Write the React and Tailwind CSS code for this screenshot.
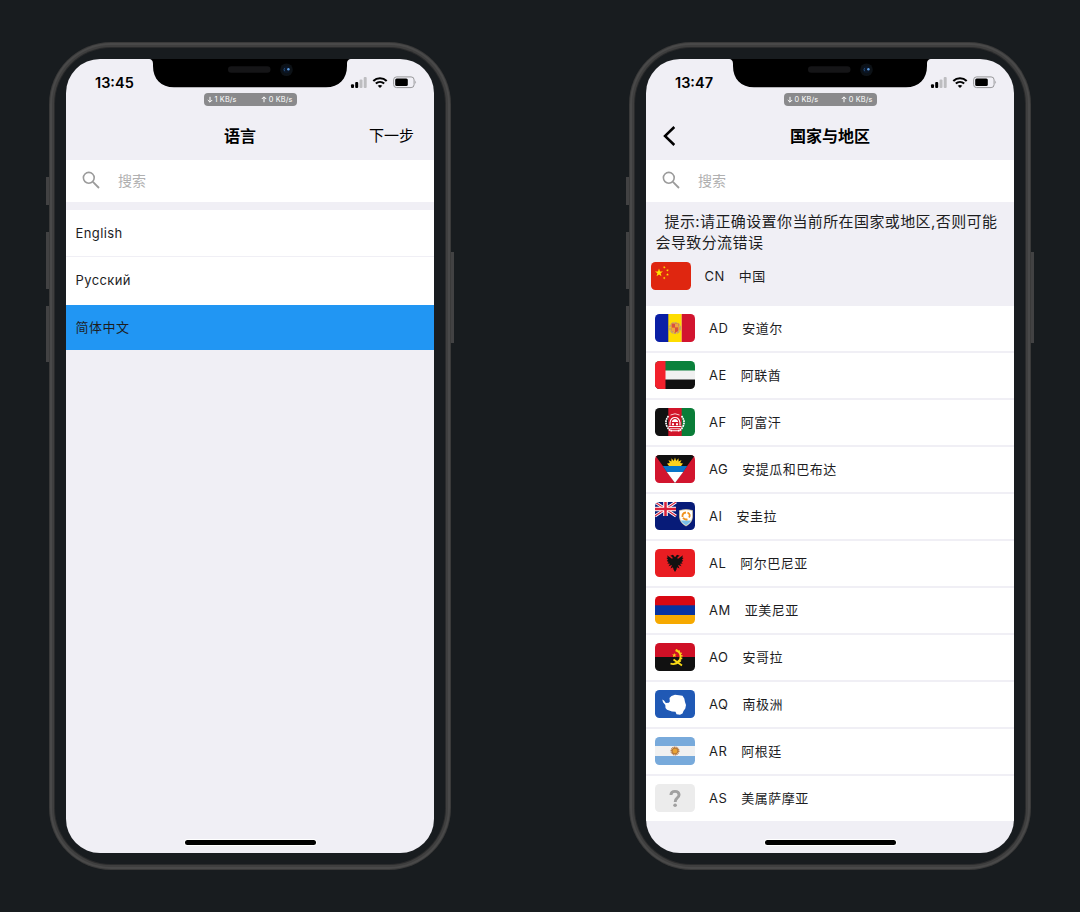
import React from "react";

const FONT = "font-['Inter','Noto_Sans_CJK_SC',sans-serif]";

function Notch() {
  return (
    <svg className="absolute left-[82px] top-0" width="204" height="29" viewBox="0 0 204 29">
      <path d="M0 0H204C200 0 199 2 199 5V7C199 20 191 28.300 178 28.300H26C13 28.300 5 20 5 7V5C5 2 4 0 0 0Z" fill="#000" />
      <rect x="80" y="7.200" width="42.500" height="6.600" rx="3.300" fill="#151517" />
      <circle cx="138.500" cy="10.700" r="6.300" fill="#0c1116" />
      <circle cx="138.500" cy="10.700" r="3.600" fill="#0a1526" />
      <path d="M136.600 9.200a2.600 2.600 0 0 0 0 3" stroke="#27507c" strokeWidth="1" fill="none" />
      <circle cx="140.400" cy="10.200" r="1.200" fill="#5b9be0" />
    </svg>
  );
}

function StatusIcons() {
  return (
    <svg className="absolute left-[284px] top-[16px]" width="68" height="16" viewBox="0 0 68 16">
      <rect x="1" y="9.300" width="3" height="3.700" rx="1" fill="#000" />
      <rect x="5.200" y="7" width="3" height="6" rx="1" fill="#000" />
      <rect x="9.500" y="4.500" width="3" height="8.500" rx="1" fill="#bdbdc0" />
      <rect x="13.700" y="2" width="3" height="11" rx="1" fill="#bdbdc0" />
      <path d="M23.300 5.900a9.800 9.800 0 0 1 13.400 0" stroke="#000" strokeWidth="2.100" fill="none" />
      <path d="M25.800 8.600a6.200 6.200 0 0 1 8.400 0" stroke="#000" strokeWidth="2" fill="none" />
      <path d="M27.700 10.800Q30 9 32.300 10.800L30 13.100Z" fill="#000" />
      <rect x="43.600" y="1.900" width="20.500" height="10.700" rx="3" fill="none" stroke="#97979a" strokeWidth="1" />
      <rect x="45.200" y="3.500" width="12.600" height="7.500" rx="1.500" fill="#000" />
      <path d="M65.300 5.400q1.700 1.800 0 3.600Z" fill="#97979a" />
    </svg>
  );
}

function Arrow({ up }) {
  return (
    <svg width="6" height="7" viewBox="0 0 6 7" className={up ? "mr-[1.5px]" : "mr-[1.5px] rotate-180"}>
      <path d="M3 6.200V1M.8 3L3 .8L5.200 3" stroke="#fff" strokeWidth="1" fill="none" />
    </svg>
  );
}

function SideButton({ className }) {
  return <div className={"absolute bg-[#424243] " + className} />;
}

function Phone({ time, down, children }) {
  return (
    <div className="relative h-[828px] w-[402px] shrink-0">
      <SideButton className="-left-[3px] top-[135px] h-[28px] w-[4px]" />
      <SideButton className="-left-[3px] top-[190px] h-[57px] w-[4px]" />
      <SideButton className="-left-[3px] top-[264px] h-[56px] w-[4px]" />
      <SideButton className="-right-[3px] top-[210px] h-[91px] w-[4px]" />
      <div className="relative h-full w-full rounded-[62px] bg-[#3a3a3a] p-[1px]">
        <div className="h-full w-full rounded-[61px] bg-[#494949] p-[2px]">
          <div className="h-full w-full rounded-[59px] bg-[#3f3f3f] p-[2px]">
            <div className="h-full w-full rounded-[57px] bg-[#2a2b2c] p-[1px]">
              <div className="h-full w-full rounded-[56px] bg-[#181c1f] p-[11px]">
                <div className="relative flex h-full w-full flex-col overflow-hidden rounded-[34px] bg-[#f0eff5]">
                  <Notch />
                  <StatusIcons />
                  <div className="flex h-[34px] shrink-0 items-end pl-[29px] pb-[1px] text-[14.5px] font-semibold leading-[18px] text-black">{time}</div>
                  <div className="ml-[137.5px] flex h-[12.5px] w-[93px] shrink-0 items-center justify-between rounded-[4px] bg-[#8a8a8c] pl-[3.5px] pr-[4px] text-[7.3px] leading-none tracking-[0.15px] text-white">
                    <span className="flex items-center"><Arrow />{down} KB/s</span>
                    <span className="flex items-center"><Arrow up />0 KB/s</span>
                  </div>
                  {children}
                  <div className="absolute bottom-[8px] left-[118.5px] h-[5px] w-[131px] rounded-full bg-black ring-1 ring-white" />
                </div>
              </div>
            </div>
          </div>
        </div>
      </div>
    </div>
  );
}

function Search() {
  return (
    <div className="flex h-[41.5px] shrink-0 items-center bg-white pl-[16px] text-[14px] text-[#b0b0b0]">
      <svg width="19" height="19" viewBox="0 0 19 19" className="mr-[17px]" fill="none" stroke="#9b9b9b">
        <circle cx="6.800" cy="6.800" r="5.400" strokeWidth="1.600" />
        <path d="M10.900 10.900L17 17" strokeWidth="1.800" />
      </svg>
      <span className="mb-[1.5px]">搜索</span>
    </div>
  );
}

const star = (cx, cy, r, rot = 0) => {
  const pts = [];
  for (let i = 0; i < 10; i++) {
    const a = ((i * 36 - 90 + rot) * Math.PI) / 180;
    const q = i % 2 ? r * 0.4 : r;
    pts.push(`${cx + q * Math.cos(a)},${cy + q * Math.sin(a)}`);
  }
  return pts.join(" ");
};

const flags = {
  CN: (
    <>
      <rect width="40" height="28" fill="#df2610" />
      <polygon points={star(8, 10.800, 4.200)} fill="#ffe600" />
      <polygon points={star(13.300, 5.300, 1.500, 20)} fill="#ffe600" />
      <polygon points={star(16.500, 8.300, 1.500, 40)} fill="#ffe600" />
      <polygon points={star(16.500, 12.600, 1.500)} fill="#ffe600" />
      <polygon points={star(13.300, 16, 1.500, 20)} fill="#ffe600" />
    </>
  ),
  AD: (
    <>
      <rect width="14" height="28" fill="#0a1fa5" />
      <rect x="13.300" width="13.400" height="28" fill="#fedd00" />
      <rect x="26.700" width="13.300" height="28" fill="#d2152f" />
      <circle cx="20" cy="14" r="5" fill="none" stroke="#c9a26c" strokeWidth="2.200" strokeDasharray="2.600 .6" />
      <path d="M16.500 9.500h7v7l-3.500 2.500-3.500-2.500Z" fill="#dd6a3e" />
      <path d="M20 10h3v3.500h-6V17l3 1.500Z" fill="#efa53e" />
      <path d="M17 10h3v3.500h-3ZM20 13.500h3V17l-3 1.500Z" fill="#d9503f" />
    </>
  ),
  AE: (
    <>
      <rect width="40" height="10" fill="#0a813b" />
      <rect y="9.500" width="40" height="9" fill="#f0f0f0" />
      <rect y="18.500" width="40" height="9.500" fill="#111" />
      <rect width="10.500" height="28" fill="#f2212c" />
    </>
  ),
  AF: (
    <>
      <rect width="14" height="28" fill="#111" />
      <rect x="13.300" width="14" height="28" fill="#d2152a" />
      <rect x="26.700" width="13.300" height="28" fill="#0a7d38" />
      <g stroke="#fff" fill="none" strokeWidth="1.100">
        <path d="M13.500 8Q9.500 13 11.800 18T17 22.500" strokeDasharray="1.800 .6" strokeWidth="1.700" />
        <path d="M26.500 8Q30.500 13 28.200 18T23 22.500" strokeDasharray="1.800 .6" strokeWidth="1.700" />
        <path d="M15.500 7q4.500-2.500 9 0" strokeWidth=".8" />
        <path d="M15 17.500v-3q1-5 5-5t5 5v3" />
        <path d="M13.500 18.500h13M15 22.800h10" />
        <path d="M14.500 20.700h11" strokeWidth=".8" />
      </g>
      <path d="M17 13q3-4 6 0v1h-6ZM17 15.300h2v2h-2ZM21 15.300h2v2h-2Z" fill="#fff" />
    </>
  ),
  AG: (
    <>
      <rect width="40" height="28" fill="#d2152e" />
      <path d="M0 0H40L20 28Z" fill="#111" />
      <polygon points="20,2.5 21.2,6 23.5,3.200 23.600,6.500 26.500,5 25.200,8 28,8.500 26,11 14,11 12,8.500 14.800,8 13.500,5 16.400,6.500 16.500,3.200 18.800,6" fill="#ffd21c" />
      <path d="M7.800 11H32.200L28.200 17H11.800Z" fill="#0875c9" />
      <path d="M11.800 17H28.200L20 28Z" fill="#fff" />
    </>
  ),
  AI: (
    <>
      <rect width="40" height="28" fill="#071b78" />
      <path d="M0 0L21 14M21 0L0 14" stroke="#fff" strokeWidth="3" />
      <path d="M0 0L21 14M21 0L0 14" stroke="#d8203a" strokeWidth="1.100" />
      <path d="M10.500 0V14M0 7H21" stroke="#fff" strokeWidth="4.600" />
      <path d="M10.500 0V14M0 7H21" stroke="#d8203a" strokeWidth="2.500" />
      <path d="M24.500 8.500Q31 6.500 37.500 8.500V15Q37 21 31 24Q25 21 24.500 15Z" fill="#fff" stroke="#d8c99a" strokeWidth=".7" />
      <path d="M25.700 18.500H36.300Q34.500 21.800 31 23.200Q27.500 21.800 25.700 18.500Z" fill="#79bfe8" />
      <path d="M27.500 15q-.5-4 3.500-4.500M32.500 10.500q3.500 2 1.500 5M32.500 17.300q-3 .8-4.500-1.500" stroke="#f0921e" strokeWidth="1.800" fill="none" />
    </>
  ),
  AL: (
    <>
      <rect width="40" height="28" fill="#e91d22" />
      <path d="M20 8.200L18 5.800L15.300 6.800L17.500 8.200L17.300 10L12 6.300L12.800 8.500L11.500 9L13 10.700L11.700 12L13.700 12.900L12.300 14.600L15 14.700L13.500 17.300L17 16L15.500 19.500L18 18.200L18.500 20.500L20 23L21.500 20.500L22 18.200L24.500 19.500L23 16L26.500 17.300L25 14.700L27.700 14.600L26.300 12.900L28.300 12L27 10.700L28.500 9L27.200 8.500L28 6.300L22.700 10L22.500 8.200L24.700 6.800L22 5.800Z" fill="#111" />
    </>
  ),
  AM: (
    <>
      <rect width="40" height="10" fill="#d90812" />
      <rect y="9.300" width="40" height="10" fill="#0733a0" />
      <rect y="19" width="40" height="9" fill="#f6a900" />
    </>
  ),
  AO: (
    <>
      <rect width="40" height="14" fill="#cf1026" />
      <rect y="14" width="40" height="14" fill="#111" />
      <path d="M20.500 7.300a6.300 6.300 0 0 1 .5 12.200" fill="none" stroke="#f9d916" strokeWidth="1.800" />
      <path d="M21 6.700a7 7 0 0 1 .5 13.700" fill="none" stroke="#f9d916" strokeWidth="1.500" strokeDasharray="1.500 1.200" />
      <path d="M18.500 16.500L27 22.500M15.500 20.500Q20 22.500 25 17.500" fill="none" stroke="#f9d916" strokeWidth="1.800" />
      <polygon points={star(19.300, 12.300, 2.400)} fill="#f9d916" />
    </>
  ),
  AQ: (
    <>
      <rect width="40" height="28" fill="#2059b5" />
      <path d="M7.300 9.500L9 10.600L10.800 13L13.800 12.800L14.800 11.400L14.500 8L16.500 6L20 4.800L24 5.200L27.500 5.800L29.300 8.500L30 12L31 15L30.300 18.500L28.500 21L27.500 23.500L25 24.800L21.500 24.200L20.500 21.700L17 21.500L12 19.800L10.500 18L10.300 15L8 12.300Z" fill="#fff" />
    </>
  ),
  AR: (
    <>
      <rect width="40" height="28" fill="#78aadb" />
      <rect y="9" width="40" height="10" fill="#f1f1f1" />
      <circle cx="20" cy="14" r="3.700" fill="none" stroke="#bc7d46" strokeWidth="1.600" strokeDasharray="1.100 .5" />
      <circle cx="20" cy="14" r="2.900" fill="#eaa334" stroke="#a5672f" strokeWidth=".8" />
    </>
  ),
  AS: (
    <>
      <rect width="40" height="28" fill="#ececec" />
      <path d="M15.900 11Q16.100 7.400 20 7.400T24.100 10.800Q24.100 12.600 22 14.200Q20.200 15.500 20.200 18" fill="none" stroke="#a0a0a0" strokeWidth="2.900" />
      <circle cx="20.100" cy="21.300" r="1.800" fill="#a0a0a0" />
    </>
  ),
};

function Flag({ code }) {
  return (
    <svg width="40" height="28" viewBox="0 0 40 28" className="mb-[1.5px] mr-[14px] shrink-0 rounded-[4.5px]">
      {flags[code]}
    </svg>
  );
}

const countries = [
  ["AD", "安道尔"],
  ["AE", "阿联酋"],
  ["AF", "阿富汗"],
  ["AG", "安提瓜和巴布达"],
  ["AI", "安圭拉"],
  ["AL", "阿尔巴尼亚"],
  ["AM", "亚美尼亚"],
  ["AO", "安哥拉"],
  ["AQ", "南极洲"],
  ["AR", "阿根廷"],
  ["AS", "美属萨摩亚"],
];

const ROW = "flex shrink-0 items-center text-[13px] text-[#1d1d1f]";

export default function App() {
  return (
    <div className={"flex h-[912px] w-[1080px] gap-[178px] overflow-hidden bg-[#181c1f] pl-[49px] pt-[42px] " + FONT}>
      <Phone time="13:45" down="1">
        <div className="grid h-[54.5px] shrink-0 grid-cols-[1fr_auto_1fr] items-center pr-[20px] pt-[7px] text-black">
          <span />
          <h1 className="text-[16px] font-bold">语言</h1>
          <span className="text-right text-[15px]">下一步</span>
        </div>
        <Search />
        <ul className="mt-[8.5px] flex flex-col">
          <li className={ROW + " h-[46px] bg-white pl-[9.5px] pt-[1px] tracking-[0.4px]"}>English</li>
          <li className={ROW + " mt-[1px] h-[48px] bg-white pl-[9.5px] pb-[1px] tracking-[0.4px]"}>Русский</li>
          <li className={ROW + " h-[44.5px] bg-[#2196f3] pl-[9.5px] tracking-[0.5px]"}>简体中文</li>
        </ul>
      </Phone>
      <Phone time="13:47" down="0">
        <div className="grid h-[54.5px] shrink-0 grid-cols-[1fr_auto_1fr] items-center pl-[17px] pt-[7px] pr-[17px] text-black">
          <svg width="13" height="20" viewBox="0 0 13 20" fill="none" stroke="#000" strokeWidth="2.500">
            <path d="M11.300 1L2 10L11.300 19" />
          </svg>
          <h1 className="text-[16px] font-bold">国家与地区</h1>
          <span />
        </div>
        <Search />
        <p className="shrink-0 pl-[9.5px] pt-[9.5px] text-[15px] leading-[21px] tracking-[0.4px] text-[#1d1d1f]">
          <span className="ml-[9px] whitespace-nowrap">提示:请正确设置你当前所在国家或地区,否则可能</span>
          <br />
          会导致分流错误
        </p>
        <div className={ROW + " mb-[6px] h-[47px] pl-[4.5px] pt-[1px] tracking-[0.5px]"}>
          <Flag code="CN" />
          <span className="mr-[14px]">CN</span>
          <span>中国</span>
        </div>
        <ul className="flex flex-col gap-[2px]">
          {countries.map(([code, name]) => (
            <li key={code} className={ROW + " h-[45px] bg-white pl-[9px] tracking-[0.5px]"}>
              <Flag code={code} />
              <span className="mr-[14px]">{code}</span>
              <span>{name}</span>
            </li>
          ))}
        </ul>
      </Phone>
    </div>
  );
}
